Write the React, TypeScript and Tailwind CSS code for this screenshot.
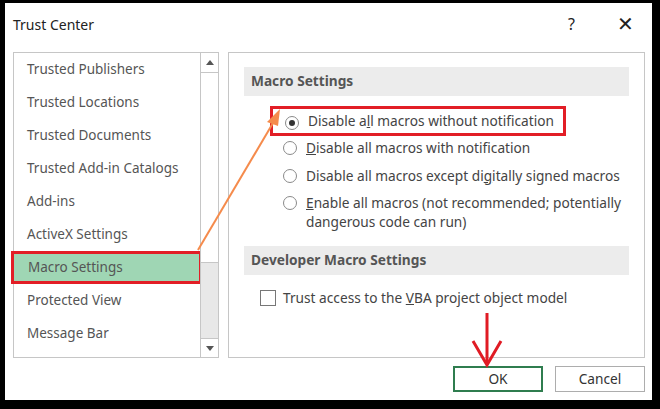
import { useState } from 'react';

const items = [
  'Trusted Publishers',
  'Trusted Locations',
  'Trusted Documents',
  'Trusted Add-in Catalogs',
  'Add-ins',
  'ActiveX Settings',
  'Macro Settings',
  'Protected View',
  'Message Bar',
];

const Radio = ({ on }: { on?: boolean }) => (
  <span className="mt-[3px] flex h-[14px] w-[14px] shrink-0 items-center justify-center rounded-full border border-[#8a8a8a] bg-white">
    {on && <span className="h-[6px] w-[6px] rounded-full bg-[#333]" />}
  </span>
);

export default function App() {
  const [selected] = useState('Macro Settings');
  return (
    <div className="h-[409px] w-[660px] bg-black pl-[5px] pr-[8px] pt-[3px] pb-[9px] font-['Noto_Sans',sans-serif] text-[13.7px] text-[#444]">
      <div className="relative flex h-full flex-col bg-white">
        <div className="flex h-[40px] items-center px-[8px] pt-[2px] text-[#222]">
          <span className="text-[14px]">Trust Center</span>
          <span className="ml-auto mr-[42px] text-[16px]">?</span>
          <span className="mr-[10px] text-[20px] font-light leading-none">✕</span>
        </div>

        <div className="mt-[9px] flex gap-[9px] pl-[8px] pr-[7px]">
          <div className="flex h-[306px] w-[206px] border border-[#c6c6c6] text-[13.5px] text-[#555]">
            <div className="flex flex-1 flex-col">
              {items.map((it) => (
                <div
                  key={it}
                  className={
                    it === selected
                      ? '-ml-[3px] -mr-[2px] flex h-[33px] items-center border-[3px] border-[#e21e26] bg-[#9fd6b4] pl-[14px]'
                      : 'flex h-[33px] items-center pl-[13px]'
                  }
                >
                  {it}
                </div>
              ))}
            </div>
            <div className="flex w-[18px] flex-col border-l border-[#c6c6c6] bg-white">
              <div className="flex h-[20px] items-center justify-center border-b border-[#c6c6c6]">
                <svg width="8" height="5" viewBox="0 0 8 5"><path d="M0 5 L4 0 L8 5 Z" fill="#555" /></svg>
              </div>
              <div className="h-[190px] border-b border-[#c6c6c6]" />
              <div className="flex-1 bg-[#e8e8e8]" />
              <div className="flex h-[19px] items-center justify-center border-t border-[#c6c6c6]">
                <svg width="8" height="5" viewBox="0 0 8 5"><path d="M0 0 L4 5 L8 0 Z" fill="#555" /></svg>
              </div>
            </div>
          </div>

          <div className="h-[306px] flex-1 border border-[#c6c6c6] px-[15px] pt-[14px]">
            <div className="flex h-[29px] items-center bg-[#ececec] pl-[7px] font-bold text-[#555]">Macro Settings</div>
            <div className="mt-[10px] flex flex-col pl-[39px]">
              <div className="-ml-[13px] flex h-[30px] w-[296px] items-center gap-[9px] border-[3px] border-[#e21e26] pl-[12px]">
                <Radio on />
                <span>
                  Disable a<u>l</u>l macros without notification
                </span>
              </div>
              <div className="mt-[2px] flex gap-[9px]">
                <Radio />
                <span>
                  <u>D</u>isable all macros with notification
                </span>
              </div>
              <div className="mt-[7px] flex gap-[9px]">
                <Radio />
                <span>
                  Disable all macros except di<u>g</u>itally signed macros
                </span>
              </div>
              <div className="mt-[7px] flex gap-[9px]">
                <Radio />
                <span className="leading-[19px]">
                  <u>E</u>nable all macros (not recommended; potentially
                  <br />
                  dangerous code can run)
                </span>
              </div>
            </div>
            <div className="mt-[15px] flex h-[29px] items-center bg-[#ececec] pl-[7px] font-bold text-[#555]">
              Developer Macro Settings
            </div>
            <div className="mt-[13px] flex items-center gap-[7px] pl-[16px]">
              <span className="h-[16px] w-[16px] border border-[#777] bg-white" />
              <span>
                Trust access to the <u>V</u>BA project object model
              </span>
            </div>
          </div>
        </div>

        <div className="mt-[8px] flex justify-end gap-[12px] pr-[7px]">
          <div className="flex h-[26px] w-[90px] items-center justify-center border-2 border-[#2f7d4f] text-[#333]">OK</div>
          <div className="flex h-[26px] w-[90px] items-center justify-center border border-[#adadad] text-[#333]">Cancel</div>
        </div>

        <svg className="pointer-events-none absolute inset-0" width="647" height="397">
          <line x1="193" y1="247" x2="268" y2="120" stroke="#f58b4c" strokeWidth="2" />
          <path d="M275 106 L262 119 L273 123 Z" fill="#f58b4c" />
          <line x1="482" y1="310" x2="482" y2="360" stroke="#e01b24" strokeWidth="3" />
          <path d="M468 338 L482 362 L496 338" fill="none" stroke="#e01b24" strokeWidth="3" />
        </svg>
      </div>
    </div>
  );
}
